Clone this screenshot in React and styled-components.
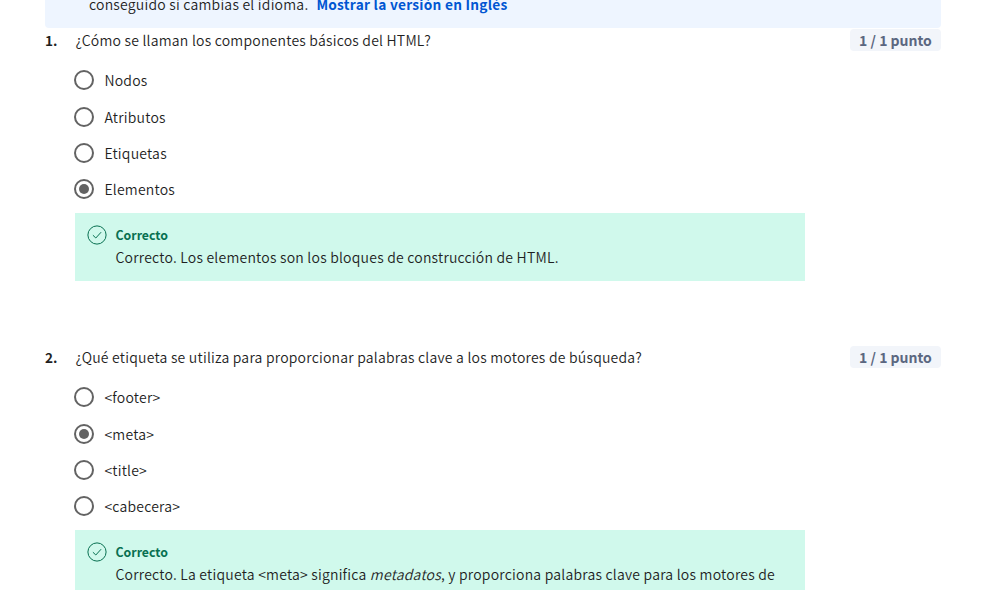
import React from "react";
import styled, { createGlobalStyle, css } from "styled-components";

const Global = createGlobalStyle`
  * { box-sizing: border-box; }
  body {
    margin: 0;
    background: #fff;
    color: #1f1f1f;
    font-family: "Noto Sans CJK SC", "Noto Sans", sans-serif;
    font-size: 14px;
    font-weight: 350;
    line-height: 24px;
    letter-spacing: 0.22px;
  }
`;

const Page = styled.main`
  width: 995px;
  height: 590px;
  padding: 0 54px 0 45px;
  overflow: hidden;
`;

const Banner = styled.div`
  height: 28px;
  display: flex;
  align-items: flex-end;
  padding: 0 44px 12px;
  gap: 8px;
  overflow: hidden;
  background: #eef5ff;
  border-radius: 0 0 4px 4px;
  white-space: nowrap;
`;

const BannerLink = styled.a`
  color: #0056d2;
  font-weight: 700;
  font-size: 13.7px;
  letter-spacing: 0.26px;
`;

const Question = styled.section`
  display: grid;
  grid-template-columns: 30px 730px 1fr;
  margin-bottom: 64px;
`;

const Number = styled.span`
  font-size: 13.6px;
  font-weight: 700;
  letter-spacing: 0;
`;

const Prompt = styled.div`
  padding-left: 0.5px;
  white-space: nowrap;
`;

const Score = styled.div`
  justify-self: end;
  width: 91px;
  height: 22px;
  margin-top: 1px;
  border-radius: 4px;
  background: #f2f5fa;
  color: #5b6780;
  font-size: 14px;
  font-weight: 700;
  letter-spacing: 0;
  line-height: 22px;
  text-align: center;
`;

const Options = styled.div`
  grid-column: 2;
  margin-top: 10px;
`;

const Option = styled.label`
  display: flex;
  align-items: center;
  height: 36px;
  margin-left: -1px;
  gap: 10.4px;
  &:first-child { margin-bottom: 1px; }
`;

const Radio = styled.span`
  display: grid;
  place-items: center;
  width: 20px;
  height: 20px;
  border: 2px solid #636363;
  border-radius: 50%;
  ${(p) => p.$checked && css`
    &::after {
      content: "";
      width: 10px;
      height: 10px;
      border-radius: 50%;
      background: #636363;
    }
  `}
`;

const OptionText = styled.span`
  font-size: 14px;
`;

const Feedback = styled.div`
  grid-column: 2;
  display: flex;
  gap: 8.5px;
  height: 68px;
  margin-top: 6px;
  padding: 12px 0 12px 12px;
  background: #d0f9ec;
  white-space: nowrap;
`;

const FeedbackIcon = styled.svg`
  flex: none;
  width: 20px;
  height: 20px;
`;

const FeedbackTitle = styled.div`
  color: #087051;
  font-size: 12.3px;
  font-weight: 700;
  letter-spacing: 0;
  line-height: 20px;
`;

const FeedbackText = styled.div`
  font-size: 14px;
`;

const questions = [
  {
    prompt: "¿Cómo se llaman los componentes básicos del HTML?",
    options: ["Nodos", "Atributos", "Etiquetas", "Elementos"],
    answer: 3,
    feedback: "Correcto. Los elementos son los bloques de construcción de HTML.",
  },
  {
    prompt: "¿Qué etiqueta se utiliza para proporcionar palabras clave a los motores de búsqueda?",
    options: ["<footer>", "<meta>", "<title>", "<cabecera>"],
    answer: 1,
    feedback: (
      <>
        Correcto. La etiqueta &lt;meta&gt; significa <em>metadatos</em>, y proporciona palabras clave para los motores de
      </>
    ),
  },
];

export default function App() {
  return (
    <>
      <Global />
      <Page>
        <Banner>
          <span>conseguido si cambias el idioma.</span>
          <BannerLink>Mostrar la versión en Inglés</BannerLink>
        </Banner>
        {questions.map((q, i) => (
          <Question key={i}>
            <Number>{i + 1}.</Number>
            <Prompt>{q.prompt}</Prompt>
            <Score>1 / 1 punto</Score>
            <Options>
              {q.options.map((text, n) => (
                <Option key={text}>
                  <Radio $checked={n === q.answer} />
                  <OptionText>{text}</OptionText>
                </Option>
              ))}
            </Options>
            <Feedback>
              <FeedbackIcon viewBox="0 0 20 20" fill="none" stroke="#087051">
                <circle cx="10" cy="10" r="9.1" />
                <path d="M5.9 10.2 8.8 13 14.1 7.2" />
              </FeedbackIcon>
              <div>
                <FeedbackTitle>Correcto</FeedbackTitle>
                <FeedbackText>{q.feedback}</FeedbackText>
              </div>
            </Feedback>
          </Question>
        ))}
      </Page>
    </>
  );
}
